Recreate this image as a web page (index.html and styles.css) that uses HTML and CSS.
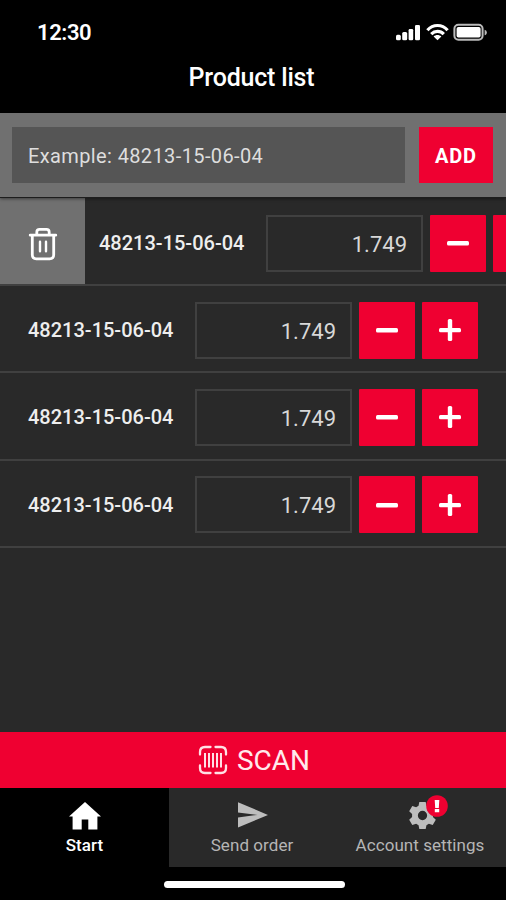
FILE: index.html
```html
<!DOCTYPE html>
<html lang="en">
<head>
<meta charset="utf-8">
<title>Product list</title>
<link rel="stylesheet" href="styles.css">
</head>
<body>
<svg class="defs" aria-hidden="true">
  <symbol id="minus" viewBox="0 0 22 22"><rect x="0" y="9" width="22" height="4.6" rx="1.5"/></symbol>
  <symbol id="plus" viewBox="0 0 22 22"><rect x="0" y="8.9" width="22" height="4.4" rx="1.5"/><rect x="8.8" y="0" width="4.4" height="22" rx="1.5"/></symbol>
</svg>
<div class="app">
  <header class="header">
    <div class="status">
      <span class="time">12:30</span>
      <svg class="status-icons" width="92" height="18" viewBox="0 0 92 18" fill="#fff">
        <rect x="1" y="11.8" width="4.8" height="5.4" rx="1.5"/>
        <rect x="7.2" y="9" width="5" height="8.2" rx="1.5"/>
        <rect x="13.6" y="6" width="4.6" height="11.2" rx="1.3"/>
        <rect x="20" y="2" width="5" height="15.2" rx="1.3"/>
        <g fill="none" stroke="#fff" stroke-width="3.2">
          <path d="M32.4 7.2C38 .9 47 .9 52.6 7.2"/>
          <path d="M36.2 11.1c3.7-3.7 9-3.7 12.6 0"/>
        </g>
        <path d="M38.6 13.4c2.3-2 5.4-2 7.800 0L42.5 17.3z"/>
        <rect x="59.4" y="1.8" width="28.2" height="15" rx="4" fill="none" stroke="#bbb" stroke-width="2"/>
        <rect x="61.6" y="4" width="24" height="10.6" rx="1.8"/>
        <path d="M89.6 6.7c3 .6 3 5 0 5.6z" fill="#bbb"/>
      </svg>
    </div>
    <h1 class="title">Product list</h1>
  </header>

  <div class="add-bar">
    <div class="add-input">Example: 48213-15-06-04</div>
    <button class="add-btn">ADD</button>
  </div>

  <main class="list">
    <div class="row row-swiped">
      <div class="delete">
        <svg width="30" height="34" viewBox="0 0 30 34" fill="none" stroke="#fff" stroke-width="2.8" stroke-linecap="round" stroke-linejoin="round">
          <path d="M2.2 8.2h25.6M8.8 7.500V5.200q0-2.800 2.800-2.800h6.800q2.800 0 2.800 2.800v2.300M4.300 8.600v19.200q0 4 4 4h13.400q4 0 4-4V8.600"/>
          <path d="M12 14.800v9.400M18 14.800v9.400" stroke-width="2.4"/>
        </svg>
      </div>
      <span class="code">48213-15-06-04</span>
      <span class="qty">1.749</span>
      <button class="step"><svg><use href="#minus"/></svg></button>
      <button class="step"><svg><use href="#plus"/></svg></button>
    </div>
    <div class="row">
      <span class="code">48213-15-06-04</span>
      <span class="qty">1.749</span>
      <button class="step"><svg><use href="#minus"/></svg></button>
      <button class="step"><svg><use href="#plus"/></svg></button>
    </div>
    <div class="row">
      <span class="code">48213-15-06-04</span>
      <span class="qty">1.749</span>
      <button class="step"><svg><use href="#minus"/></svg></button>
      <button class="step"><svg><use href="#plus"/></svg></button>
    </div>
    <div class="row">
      <span class="code">48213-15-06-04</span>
      <span class="qty">1.749</span>
      <button class="step"><svg><use href="#minus"/></svg></button>
      <button class="step"><svg><use href="#plus"/></svg></button>
    </div>
  </main>

  <button class="scan">
    <svg width="30" height="30" viewBox="0 0 30 30" fill="none" stroke="#ffe0e5" stroke-width="2.3" stroke-linecap="round">
      <path d="M2 9.500V7q0-5 5-5h5.500M17.500 2H23q5 0 5 5v2.500M28 20.500V23q0 5-5 5h-5.500M12.500 28H7q-5 0-5-5v-2.500"/>
      <path d="M7 8v14.500M11 8v14.500M15 8v14.500M19 8v14.500M23 8v14.500" stroke-width="2" stroke-linecap="butt"/>
    </svg>
    <span>SCAN</span>
  </button>

  <nav class="tabs">
    <a class="tab tab-active">
      <svg width="32" height="28" viewBox="0 0 32 28" fill="#fff"><path d="M16 0 32 14.400H28.400V27.400H19.300V17.500H12.700V27.400H3.600V14.400H0z"/></svg>
      <span>Start</span>
    </a>
    <a class="tab">
      <svg width="32" height="28" viewBox="0 0 32 28" fill="#bdbdbd"><path d="M1 .2 31 12.900 1 25.600V15.400L20.500 12.900 1 10.400z"/></svg>
      <span>Send order</span>
    </a>
    <a class="tab">
      <div class="gear">
        <svg width="27" height="27" viewBox="0 0 28 28"><path fill="#bdbdbd" fill-rule="evenodd" d="M10.700 0h6.600l.8 4 2.500 1.500 4-1.400 3.200 5.600-3 2.800v3l3 2.800-3.200 5.600-4-1.400-2.500 1.500-.8 4h-6.600l-.8-4-2.500-1.500-4 1.400L.2 18.300l3-2.800v-3l-3-2.800 3.200-5.600 4 1.400L9.900 4zM14 9.200a4.800 4.800 0 1 0 0 9.600 4.800 4.800 0 0 0 0-9.600z"/></svg>
        <svg class="badge" width="22" height="22" viewBox="0 0 22 22"><circle cx="11" cy="11" r="10.800" fill="#ef0031"/><path fill="#fff" d="M8.700 4.900h4.600l-.5 8.100H9.200zM8.800 14.100h4.400v3.200H8.800z"/></svg>
      </div>
      <span>Account settings</span>
    </a>
  </nav>
  <footer class="home"><div class="home-bar"></div></footer>
</div>
</body>
</html>
```
FILE: styles.css
```css
* { box-sizing: border-box; }
body { margin: 0; background: #000; font-family: Roboto, sans-serif; }
button { border: 0; padding: 0; margin: 0; font-family: inherit; color: #fff; background: #ef0031; display: flex; align-items: center; justify-content: center; }
.defs { display: none; }
.app { width: 506px; height: 900px; display: flex; flex-direction: column; overflow: hidden; background: #292929; }

.header { height: 113px; flex: none; background: #000; color: #fff; }
.status { display: flex; justify-content: space-between; align-items: flex-start; height: 63px; padding: 20px 19px 0 37px; }
.time { font-size: 22px; line-height: 26px; font-weight: 600; letter-spacing: -0.4px; }
.status-icons { margin-top: 3px; }
.title { margin: 0; text-align: center; font-size: 25px; line-height: 30px; font-weight: 500; letter-spacing: -0.2px; padding-right: 3px; }

.add-bar { height: 85px; flex: none; display: flex; justify-content: space-between; padding: 14px 13px 0 12px; background: #707070; border-bottom: 1px solid #1d1d1d; box-shadow: 0 1px 3px rgba(0, 0, 0, .45); position: relative; }
.add-input { width: 393px; height: 56px; padding-left: 16px; background: #555; color: #dedede; font-size: 20px; line-height: 58px; letter-spacing: .38px; }
.add-btn { width: 74px; height: 56px; font-size: 20px; font-weight: 700; letter-spacing: .8px; padding-top: 2px; }

.list { flex: 1; }
.row { height: 87.25px; display: flex; align-items: center; padding: 4px 0 0 28px; border-bottom: 2px solid #404040; overflow: hidden; }
.row-swiped { height: 88px; padding-left: 0; }
.row + .row { padding-top: 3px; }
.delete { width: 85px; flex: none; align-self: stretch; margin: -4px 14px 0 0; padding-top: 5px; display: flex; align-items: center; justify-content: center; background: #707070; }
.code { width: 167px; flex: none; color: #eee; font-size: 20px; font-weight: 500; letter-spacing: 0; white-space: nowrap; }
.qty { width: 157px; height: 57px; flex: none; margin-right: 7px; padding-right: 14px; border: 2px solid #404040; text-align: right; color: #d8d8d8; font-size: 22px; line-height: 55px; }
.step { width: 56px; height: 57px; flex: none; margin-right: 7px; border-radius: 1px; }
.step svg { width: 22px; height: 22px; fill: #fff; }

.scan { height: 56px; flex: none; gap: 9px; padding-left: 2px; font-size: 28px; color: #ffe9ec; }
.tabs { height: 79px; flex: none; display: grid; grid-template-columns: 169px 168px 169px; }
.tab { display: flex; flex-direction: column; align-items: center; padding-top: 14px; color: #b5b5b5; font-size: 17px; line-height: 20px; letter-spacing: .06px; white-space: nowrap; }
.tab span { margin-top: 5px; }
.tab:nth-child(2) span { padding-right: 2px; }
.tab:nth-child(3) { padding-right: 3px; }
.tab-active { background: #000; color: #fff; font-weight: 500; }
.gear { position: relative; height: 28px; margin-left: 5px; }
.badge { position: absolute; left: 17px; top: -7px; }
.home { height: 33px; flex: none; display: flex; justify-content: center; padding-top: 14px; background: #000; }
.home-bar { width: 181px; height: 7px; border-radius: 4px; background: #fff; margin-left: 3px; }
```
